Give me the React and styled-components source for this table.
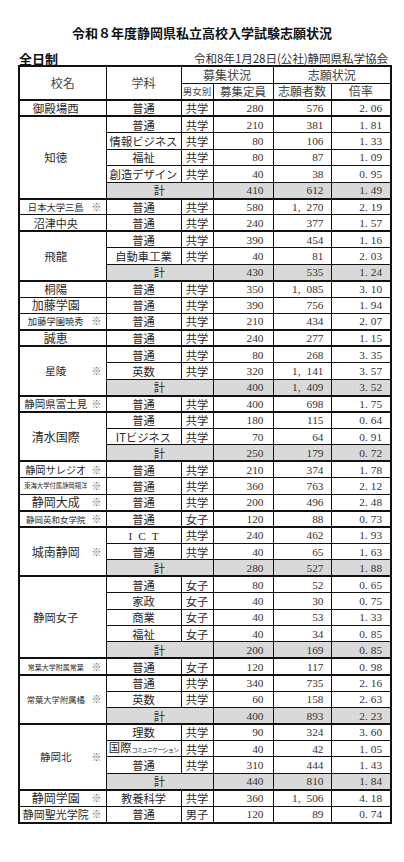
import React from 'react'
import styled, { createGlobalStyle } from 'styled-components'

const GlobalStyle = createGlobalStyle`
  body {
    margin: 0;
    background: #fff;
    color: #2a2a2a;
    font-family: "Noto Sans CJK JP", "Noto Sans", sans-serif;
  }
`

const Page = styled.div`
  width: 404px;
  padding: 25px 0 40px;
`

const Title = styled.h1`
  margin: 0;
  text-align: center;
  font-size: 13px;
  line-height: 16px;
  font-weight: 700;
  color: #111;
`

const Meta = styled.div`
  display: flex;
  justify-content: space-between;
  align-items: flex-end;
  margin: 9px 16px 0 19px;
  height: 15px;
`

const Section = styled.span`
  font-size: 13px;
  line-height: 13px;
  font-weight: 700;
  color: #111;
  text-decoration: underline;
  text-decoration-thickness: 2px;
  text-underline-offset: 1px;
`

const Source = styled.span`
  font-size: 11.6px;
  line-height: 13px;
  color: #333;
  letter-spacing: -0.1px;
`

const Table = styled.table`
  margin-left: 18px;
  width: 372px;
  table-layout: fixed;
  border-collapse: collapse;
  border: 2px solid #111;
`

const Head = styled.thead`
  border-bottom: 2px solid #111;
  tr {
    height: 17px;
  }
`

const Group = styled.tbody`
  border-top: ${p => (p.$thin ? '1px' : '2px')} solid #111;
  tr {
    height: 16.43px;
  }
`

const Cell = styled.td`
  border: 1px solid #111;
  padding: 0;
  line-height: 12px;
  vertical-align: middle;
  white-space: nowrap;
`

const HeadCell = styled(Cell).attrs({ as: 'th' })`
  font-weight: 400;
  text-align: center;
  color: #444;
  font-size: ${p => p.$size || 11.5}px;
`

const NameCell = styled(Cell)`
  padding: 0 4px 0 2px;
`

const NameWrap = styled.div`
  display: flex;
  align-items: center;
`

const NameText = styled.span`
  flex: 1;
  text-align: center;
  font-size: ${p => p.$size}px;
  color: #2a2a2a;
`

const Mark = styled.span`
  width: 12px;
  text-align: right;
  font-size: 10px;
  color: #666;
`

const TextCell = styled(Cell)`
  text-align: center;
  font-size: 11.3px;
  background: ${p => (p.$total ? '#d9d9d9' : 'transparent')};
`

const NumCell = styled(Cell)`
  text-align: right;
  padding-right: ${p => p.$pad}px;
  font-family: "Liberation Serif", "DejaVu Serif", serif;
  font-size: 11.3px;
  color: #333;
  background: ${p => (p.$total ? '#d9d9d9' : 'transparent')};
`

const Sep = styled.span`
  margin-right: ${p => (p.$comma ? 6 : 3)}px;
`

const Latin = styled.span`
  font-family: "Liberation Serif", serif;
  letter-spacing: 6px;
  margin-right: -6px;
`

const Tiny = styled.span`
  font-size: 6px;
  letter-spacing: -0.8px;
`

const ICT = <Latin>ICT</Latin>
const KOKUSAI = (
  <>
    国際<Tiny>コミュニケーション</Tiny>
  </>
)

const schools = [
  { name: '御殿場西', rows: [['普通', '共学', '280', '576', '2.06']] },
  {
    name: '知徳',
    rows: [
      ['普通', '共学', '210', '381', '1.81'],
      ['情報ビジネス', '共学', '80', '106', '1.33'],
      ['福祉', '共学', '80', '87', '1.09'],
      ['創造デザイン', '共学', '40', '38', '0.95'],
    ],
    total: ['410', '612', '1.49'],
  },
  { name: '日本大学三島', mark: true, size: 9.3, rows: [['普通', '共学', '580', '1,270', '2.19']] },
  { name: '沼津中央', size: 11, thin: true, rows: [['普通', '共学', '240', '377', '1.57']] },
  {
    name: '飛龍',
    rows: [
      ['普通', '共学', '390', '454', '1.16'],
      ['自動車工業', '共学', '40', '81', '2.03'],
    ],
    total: ['430', '535', '1.24'],
  },
  { name: '桐陽', rows: [['普通', '共学', '350', '1,085', '3.10']] },
  { name: '加藤学園', size: 12, thin: true, rows: [['普通', '共学', '390', '756', '1.94']] },
  { name: '加藤学園暁秀', mark: true, size: 9.3, thin: true, rows: [['普通', '共学', '210', '434', '2.07']] },
  { name: '誠恵', size: 12, rows: [['普通', '共学', '240', '277', '1.15']] },
  {
    name: '星陵',
    mark: true,
    size: 10.5,
    rows: [
      ['普通', '共学', '80', '268', '3.35'],
      ['英数', '共学', '320', '1,141', '3.57'],
    ],
    total: ['400', '1,409', '3.52'],
  },
  { name: '静岡県富士見', mark: true, size: 10.5, rows: [['普通', '共学', '400', '698', '1.75']] },
  {
    name: '清水国際',
    size: 12,
    rows: [
      ['普通', '共学', '180', '115', '0.64'],
      ['ITビジネス', '共学', '70', '64', '0.91'],
    ],
    total: ['250', '179', '0.72'],
  },
  { name: '静岡サレジオ', mark: true, size: 10.2, rows: [['普通', '共学', '210', '374', '1.78']] },
  { name: '東海大学付属静岡翔洋', mark: true, size: 6.3, thin: true, rows: [['普通', '共学', '360', '763', '2.12']] },
  { name: '静岡大成', mark: true, size: 12, thin: true, rows: [['普通', '共学', '200', '496', '2.48']] },
  { name: '静岡英和女学院', mark: true, size: 8.5, rows: [['普通', '女子', '120', '88', '0.73']] },
  {
    name: '城南静岡',
    mark: true,
    size: 12,
    rows: [
      [ICT, '共学', '240', '462', '1.93'],
      ['普通', '共学', '40', '65', '1.63'],
    ],
    total: ['280', '527', '1.88'],
  },
  {
    name: '静岡女子',
    size: 11.3,
    rows: [
      ['普通', '女子', '80', '52', '0.65'],
      ['家政', '女子', '40', '30', '0.75'],
      ['商業', '女子', '40', '53', '1.33'],
      ['福祉', '女子', '40', '34', '0.85'],
    ],
    total: ['200', '169', '0.85'],
  },
  { name: '常葉大学附属常葉', mark: true, size: 7, rows: [['普通', '女子', '120', '117', '0.98']] },
  {
    name: '常葉大学附属橘',
    mark: true,
    size: 8.3,
    rows: [
      ['普通', '共学', '340', '735', '2.16'],
      ['英数', '共学', '60', '158', '2.63'],
    ],
    total: ['400', '893', '2.23'],
  },
  {
    name: '静岡北',
    mark: true,
    size: 10.5,
    rows: [
      ['理数', '共学', '90', '324', '3.60'],
      [KOKUSAI, '共学', '40', '42', '1.05'],
      ['普通', '共学', '310', '444', '1.43'],
    ],
    total: ['440', '810', '1.84'],
  },
  { name: '静岡学園', mark: true, size: 12, rows: [['教養科学', '共学', '360', '1,506', '4.18']] },
  { name: '静岡聖光学院', mark: true, size: 11, thin: true, rows: [['普通', '男子', '120', '89', '0.74']] },
]

const PADS = [9, 7, 8]

function Figure({ value }) {
  const m = value.match(/^(\d+)([.,])(\d+)$/)
  if (!m) return value
  return (
    <>
      {m[1]}
      <Sep $comma={m[2] === ','}>{m[2]}</Sep>
      {m[3]}
    </>
  )
}

function Numbers({ values, total }) {
  return values.map((v, i) => (
    <NumCell key={i} $pad={PADS[i]} $total={total}>
      <Figure value={v} />
    </NumCell>
  ))
}

function SchoolGroup({ school }) {
  const span = school.rows.length + (school.total ? 1 : 0)
  return (
    <Group $thin={school.thin}>
      {school.rows.map((row, i) => (
        <tr key={i}>
          {i === 0 && (
            <NameCell rowSpan={span}>
              <NameWrap>
                <NameText $size={school.size || 11.5}>{school.name}</NameText>
                <Mark>{school.mark ? '※' : ''}</Mark>
              </NameWrap>
            </NameCell>
          )}
          <TextCell>{row[0]}</TextCell>
          <TextCell>{row[1]}</TextCell>
          <Numbers values={row.slice(2)} />
        </tr>
      ))}
      {school.total && (
        <tr>
          <TextCell colSpan={2} $total>
            計
          </TextCell>
          <Numbers values={school.total} total />
        </tr>
      )}
    </Group>
  )
}

export default function App() {
  return (
    <Page>
      <GlobalStyle />
      <Title>令和８年度静岡県私立高校入学試験志願状況</Title>
      <Meta>
        <Section>全日制</Section>
        <Source>令和8年1月28日(公社)静岡県私学協会</Source>
      </Meta>
      <Table>
        <colgroup>
          <col style={{ width: 87 }} />
          <col style={{ width: 75 }} />
          <col style={{ width: 32 }} />
          <col style={{ width: 60 }} />
          <col style={{ width: 58 }} />
          <col style={{ width: 60 }} />
        </colgroup>
        <Head>
          <tr>
            <HeadCell rowSpan={2} $size={12}>校名</HeadCell>
            <HeadCell rowSpan={2} $size={12}>学科</HeadCell>
            <HeadCell colSpan={2} $size={12}>募集状況</HeadCell>
            <HeadCell colSpan={2} $size={12}>志願状況</HeadCell>
          </tr>
          <tr>
            <HeadCell $size={9.5}>男女別</HeadCell>
            <HeadCell $size={11.5}>募集定員</HeadCell>
            <HeadCell $size={12}>志願者数</HeadCell>
            <HeadCell $size={12}>倍率</HeadCell>
          </tr>
        </Head>
        {schools.map(s => (
          <SchoolGroup key={s.name} school={s} />
        ))}
      </Table>
    </Page>
  )
}
